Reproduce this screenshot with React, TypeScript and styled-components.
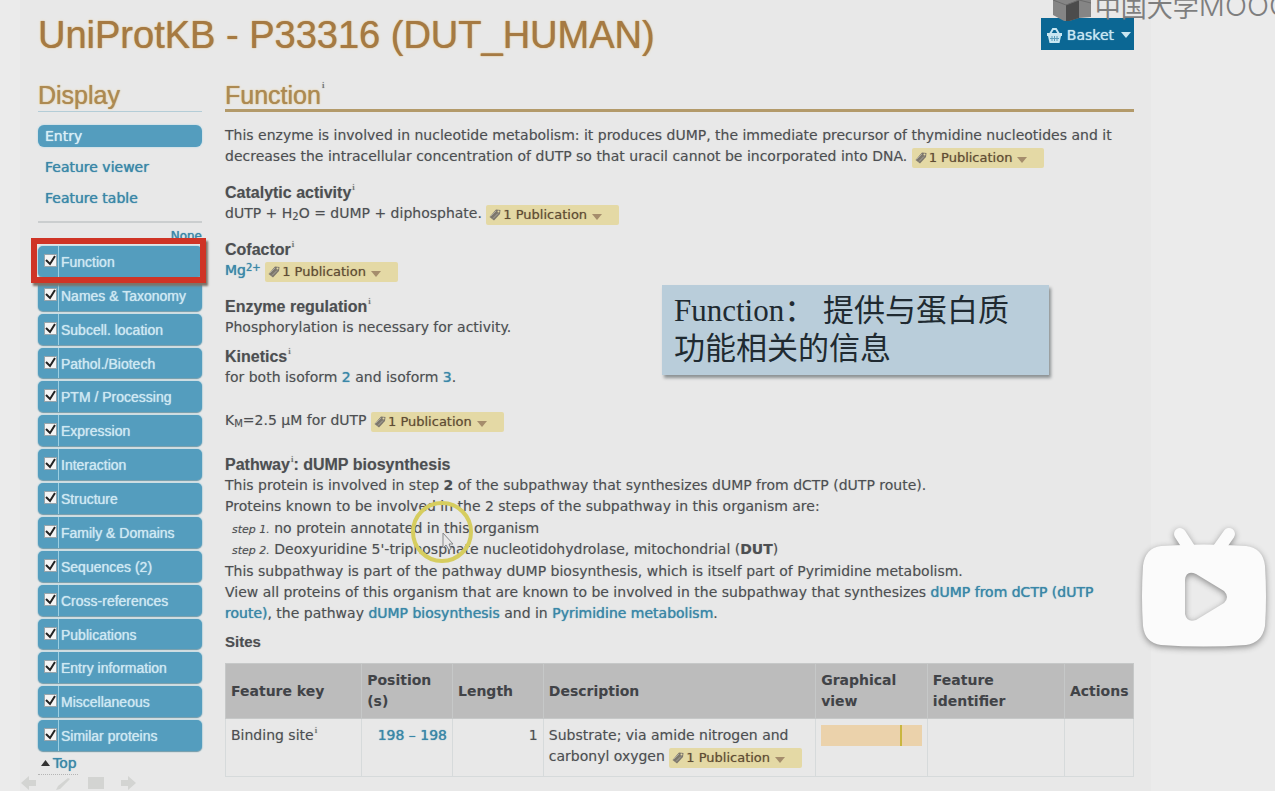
import React from 'react';
import styled, { createGlobalStyle, css } from 'styled-components';

const sans = `"Liberation Sans", Arial, sans-serif`;
const wide = `"DejaVu Sans", Verdana, sans-serif`;
const blue = '#549dbe';
const link = '#3a87a8';
const gold = '#a67a42';
const paleGold = '#ad8a52';

const GlobalStyle = createGlobalStyle`
  *, *::before, *::after { box-sizing: border-box; }
  body { margin: 0; background: #e8e8e8; }
  h1, h2, h3, h4, p, ul, ol { margin: 0; padding: 0; font-weight: normal; }
  ul, ol { list-style: none; }
  a { color: ${link}; text-decoration: none; }
  button, input { font: inherit; }
`;

const Page = styled.div`
  position: relative;
  display: flex;
  flex-direction: column;
  min-height: 100vh;
  overflow: hidden;
  padding: 0 141px 15px 38px;
  background: linear-gradient(to right, #ebebeb 20px, #e8e8e8 20px, #e8e8e8 calc(100% - 124px), #ebebeb calc(100% - 124px));
  color: #4d4f52;
  font: 14px/21px ${wide};
  text-shadow: 0 0 1px #b4b5b6;
`;

const TopBar = styled.header`
  display: flex;
  justify-content: space-between;
  align-items: flex-start;
  padding-top: 12px;
`;

const Title = styled.h1`
  color: ${gold};
  font: 38px/46px ${sans};
  text-shadow: 0 0 1px ${gold}, 0 0 3px #f3dfb8;
`;

const BasketButton = styled.button`
  display: flex;
  align-items: center;
  gap: 5px;
  height: 32px;
  margin-top: 6px;
  padding: 2px 3px 0 6px;
  border: 0;
  background: #0b6794;
  color: #c9e6f1;
  text-shadow: 0 0 1px #c9e6f1;
  white-space: nowrap;
  svg:last-child { margin-left: 2px; }
`;

const Columns = styled.div`
  display: flex;
  align-items: flex-start;
  gap: 23px;
  padding-top: 22px;
`;

const Sidebar = styled.nav`
  flex: 0 0 164px;
`;

const Main = styled.main`
  flex: 1;
  min-width: 0;
`;

const SectionTitle = styled.h2<{ $strong?: boolean }>`
  height: 32px;
  margin-bottom: 13px;
  border-bottom: ${p => (p.$strong ? '3px solid #b39a6a' : '1px solid #b4cdd7')};
  color: ${paleGold};
  font: 25px/30px ${sans};
  text-shadow: 0 0 1px ${paleGold}, 0 0 3px #f3dfb8;
`;

const Info = styled.sup`
  margin-left: 1px;
  font: 9px/10px "Liberation Serif", serif;
  vertical-align: top;
  color: #66686a;
  text-shadow: 0 0 1px #66686a;
`;

const ViewLink = styled.a<{ $active?: boolean }>`
  display: block;
  height: 22px;
  margin-bottom: 9px;
  padding-left: 7px;
  border-radius: 6px;
  line-height: 22px;
  text-shadow: 0 0 1px currentColor;
  ${p => p.$active && css`
    background: ${blue};
    color: #d9eef6;
    box-shadow: 0 0 2px #9fd0e3;
  `}
`;

const NoneRow = styled.div`
  height: 25px;
  margin-top: 12px;
  padding-top: 4px;
  border-top: 2px solid #cbcecf;
  text-align: right;
  font-size: 12px;
  line-height: 18px;
  a { text-shadow: 0 0 1px currentColor; }
`;

const SectionList = styled.ul`
  display: grid;
  grid-auto-rows: 1fr;
  gap: 3px;
  height: 505px;
`;

const SectionItem = styled.li<{ $marked?: boolean }>`
  position: relative;
  display: flex;
  border-radius: 5px;
  background: ${blue};
  box-shadow: 0 0 2px #7fc0da, 0 1px 1px #6d8c99;
  ${p => p.$marked && css`
    z-index: 1;
    &::after {
      content: '';
      position: absolute;
      inset: -8px -4px -6px -7px;
      border: 6px solid #cf3426;
      box-shadow: 2px 3px 2px #7d7369;
      pointer-events: none;
    }
  `}
`;

const SectionLabel = styled.label`
  display: flex;
  align-items: stretch;
  width: 100%;
  color: #cfe8f2;
  font: 14px/28px ${sans};
  text-shadow: 0 0 1px #cfe8f2;
  white-space: nowrap;
`;

const Check = styled.input`
  appearance: none;
  flex: 0 0 13px;
  height: 13px;
  margin: 8px 1px 0 6px;
  border: 1px solid #97a5ac;
  background: #f4f4f4 url("data:image/svg+xml,%3Csvg xmlns='http://www.w3.org/2000/svg' viewBox='0 0 11 11'%3E%3Cpath d='M1 5l4 4 5-8' fill='none' stroke='%23222' stroke-width='2'/%3E%3C/svg%3E") center / contain no-repeat;
`;

const LabelText = styled.span`
  padding: 2px 0 0 2px;
  border-left: 1px solid #9dcfe2;
`;

const TopLink = styled.a`
  display: inline-flex;
  align-items: center;
  gap: 3px;
  height: 22px;
  margin-top: 1px;
  padding: 0 1px 0 3px;
  border-bottom: 1px dotted #b5b5b5;
  text-shadow: 0 0 1px currentColor;
`;

const Block = styled.section<{ $gap?: number }>`
  margin-top: ${p => p.$gap ?? 15}px;
`;

const BlockTitle = styled.h3`
  font: bold 16px/21px ${sans};
`;

const SitesTitle = styled.h3`
  margin: 7px 0 11px;
  font: bold 15px/21px ${sans};
`;

const SpacedText = styled.p`
  margin-top: 22px;
`;

const Small = styled.span<{ $raise?: boolean }>`
  font-size: 10px;
  line-height: 10px;
  vertical-align: ${p => (p.$raise ? '4px' : '-2px')};
`;

const TextLink = styled.a`
  text-shadow: 0 0 1px ${link};
`;

const Steps = styled.ol`
  padding: 1px 0 1px 7px;
  em { font-size: 11px; line-height: 11px; }
`;

const Badge = styled.button`
  display: inline-flex;
  align-items: center;
  height: 20px;
  margin: -4px 0;
  padding: 0 17px 0 3px;
  border: 0;
  border-radius: 2px;
  background: #e4d9a5;
  color: #5e4c35;
  font-size: 13px;
  line-height: 20px;
  vertical-align: -3px;
  white-space: nowrap;
  text-shadow: 0 0 1px #a08b62;
  svg:first-child { margin-right: 2px; }
  svg:last-child { margin: 3px 0 0 5px; }
`;

const DataTable = styled.table`
  width: 100%;
  table-layout: fixed;
  border-collapse: collapse;
  th, td {
    padding: 6px 5px;
    border: 1px solid #d6dadb;
    text-align: left;
    vertical-align: top;
  }
  th {
    background: #bcbcbc;
    border-color: #c6c8c8;
    color: #414347;
    vertical-align: middle;
  }
  td { height: 58px; }
  td.num { text-align: right; }
`;

const Track = styled.div`
  display: flex;
  justify-content: flex-end;
  height: 21px;
  padding-right: 20px;
  background: #ebd2ab;
  &::after { content: ''; width: 2px; background: #c9b63f; }
`;

const Callout = styled.aside`
  position: absolute;
  left: 662px;
  top: 285px;
  width: 387px;
  padding: 7px 12px;
  background: #b9cdda;
  box-shadow: 2px 3px 3px #8d9294;
  color: #202a31;
  font: 31px/38px "Liberation Serif", "Noto Sans CJK SC", serif;
  text-shadow: none;
`;

const Pointer = styled.svg`
  position: absolute;
  left: 409px;
  top: 500px;
`;

const Player = styled.button`
  position: absolute;
  right: 0;
  top: 518px;
  width: 141px;
  height: 141px;
  padding: 0;
  border: 0;
  background: none;
  svg { display: block; filter: drop-shadow(0 2px 3px #8a8a8a); }
`;

const Watermark = styled.div`
  position: absolute;
  top: -9px;
  right: -15px;
  display: flex;
  align-items: center;
  gap: 4px;
  height: 30px;
  color: #7e7e7e;
  font: 26px/30px "Noto Sans CJK SC", sans-serif;
  text-shadow: none;
  white-space: nowrap;
  span { font: 300 29px/30px Inter, sans-serif; }
`;

const WatermarkText = styled.div`
  display: flex;
  align-items: center;
`;

const SlideTools = styled.svg`
  position: absolute;
  left: 20px;
  top: 774px;
`;

const Caret = ({ color = '#a58d6c' }: { color?: string }) => (
  <svg width="10" height="6" viewBox="0 0 10 6"><path d="M0 0h10L5 6z" fill={color} /></svg>
);

const Publication = () => (
  <Badge type="button">
    <svg width="12" height="12" viewBox="0 0 12 12">
      <path d="M7 0.500 11.500 1 11 5 5 11.500 0.500 8z" fill="#7d776c" />
      <path d="M1.500 7.500 7 2M4 9.500l5-5" stroke="#a9a69d" strokeWidth="1" />
      <circle cx="9.500" cy="2.500" r="1" fill="#e4d9a5" />
    </svg>
    1 Publication
    <Caret />
  </Badge>
);

const sections = [
  'Function', 'Names & Taxonomy', 'Subcell. location', 'Pathol./Biotech', 'PTM / Processing',
  'Expression', 'Interaction', 'Structure', 'Family & Domains', 'Sequences (2)',
  'Cross-references', 'Publications', 'Entry information', 'Miscellaneous', 'Similar proteins',
];

const columns: [string, string][] = [
  ['Feature key', '15%'], ['Position (s)', '10%'], ['Length', '10%'], ['Description', '30%'],
  ['Graphical view', '12.3%'], ['Feature identifier', '15.1%'], ['Actions', '7.6%'],
];

export default function App() {
  return (
    <Page>
      <GlobalStyle />
      <TopBar>
        <Title>UniProtKB - P33316 (DUT_HUMAN)</Title>
        <BasketButton type="button">
          <svg width="15" height="15" viewBox="0 0 15 15">
            <path d="M0 5h15v3h-1l-1.500 7h-10L1 8H0z" fill="#c9e6f1" />
            <path d="M3 6 6 1h3l3 5" fill="none" stroke="#c9e6f1" strokeWidth="2" />
            <path d="M5 8v5M7.500 8v5M10 8v5M3 10.500h9" stroke="#5c9dbb" strokeWidth="1" />
          </svg>
          Basket
          <Caret color="#c9e6f1" />
        </BasketButton>
      </TopBar>

      <Columns>
        <Sidebar aria-label="Display">
          <SectionTitle>Display</SectionTitle>
          <ViewLink href="#entry" $active>Entry</ViewLink>
          <ViewLink href="#viewer">Feature viewer</ViewLink>
          <ViewLink href="#table">Feature table</ViewLink>
          <NoneRow><a href="#none">None</a></NoneRow>
          <SectionList>
            {sections.map((name, i) => (
              <SectionItem key={name} $marked={i === 0}>
                <SectionLabel>
                  <Check type="checkbox" defaultChecked />
                  <LabelText>{name}</LabelText>
                </SectionLabel>
              </SectionItem>
            ))}
          </SectionList>
          <TopLink href="#top">
            <svg width="9" height="6" viewBox="0 0 9 6"><path d="M0 6h9L4.500 0z" fill="#333" /></svg>
            Top
          </TopLink>
        </Sidebar>

        <Main>
          <SectionTitle $strong>Function<Info>i</Info></SectionTitle>
          <p>
            This enzyme is involved in nucleotide metabolism: it produces dUMP, the immediate precursor of
            thymidine nucleotides and it decreases the intracellular concentration of dUTP so that uracil
            cannot be incorporated into DNA. <Publication />
          </p>

          <Block>
            <BlockTitle>Catalytic activity<Info>i</Info></BlockTitle>
            <p>dUTP + H<Small>2</Small>O = dUMP + diphosphate. <Publication /></p>
          </Block>

          <Block>
            <BlockTitle>Cofactor<Info>i</Info></BlockTitle>
            <p><TextLink href="#mg">Mg<Small $raise>2+</Small></TextLink> <Publication /></p>
          </Block>

          <Block>
            <BlockTitle>Enzyme regulation<Info>i</Info></BlockTitle>
            <p>Phosphorylation is necessary for activity.</p>
          </Block>

          <Block $gap={8}>
            <BlockTitle>Kinetics<Info>i</Info></BlockTitle>
            <p>for both isoform <TextLink href="#iso2">2</TextLink> and isoform <TextLink href="#iso3">3</TextLink>.</p>
            <SpacedText>K<Small>M</Small>=2.5 µM for dUTP <Publication /></SpacedText>
          </Block>

          <Block $gap={23}>
            <BlockTitle>Pathway<Info>i</Info>: dUMP biosynthesis</BlockTitle>
            <p>This protein is involved in step <b>2</b> of the subpathway that synthesizes dUMP from dCTP (dUTP route).</p>
            <p>Proteins known to be involved in the 2 steps of the subpathway in this organism are:</p>
            <Steps>
              <li><em>step 1.</em> no protein annotated in this organism</li>
              <li><em>step 2.</em> Deoxyuridine 5'-triphosphate nucleotidohydrolase, mitochondrial (<b>DUT</b>)</li>
            </Steps>
            <p>This subpathway is part of the pathway dUMP biosynthesis, which is itself part of Pyrimidine metabolism.</p>
            <p>
              View all proteins of this organism that are known to be involved in the subpathway that synthesizes{' '}
              <TextLink href="#route">dUMP from dCTP (dUTP route)</TextLink>, the pathway{' '}
              <TextLink href="#dump">dUMP biosynthesis</TextLink> and in{' '}
              <TextLink href="#pyrimidine">Pyrimidine metabolism</TextLink>.
            </p>
          </Block>

          <SitesTitle>Sites</SitesTitle>
          <DataTable>
            <colgroup>{columns.map(([name, width]) => <col key={name} width={width} />)}</colgroup>
            <thead>
              <tr>{columns.map(([name]) => <th key={name} scope="col">{name}</th>)}</tr>
            </thead>
            <tbody>
              <tr>
                <td>Binding site<Info>i</Info></td>
                <td className="num"><TextLink href="#198">198 – 198</TextLink></td>
                <td className="num">1</td>
                <td>Substrate; via amide nitrogen and carbonyl oxygen <Publication /></td>
                <td><Track /></td>
                <td />
                <td />
              </tr>
            </tbody>
          </DataTable>
        </Main>
      </Columns>

      <Callout>Function： 提供与蛋白质功能相关的信息</Callout>

      <Pointer width="66" height="66" viewBox="0 0 66 66" aria-hidden="true">
        <circle cx="33" cy="32" r="29" fill="none" stroke="#d6cd5f" strokeWidth="4" />
        <path d="M34 33v15l3-3 3 5 2-1-2-5h4z" fill="#e8e8e8" stroke="#85878a" strokeWidth="1" />
      </Pointer>

      <Player type="button" aria-label="Play">
        <svg width="141" height="141" viewBox="1134 518 141 141">
          <path d="M1180 534l11 17M1229 534l-12 17" stroke="#fbfbfb" strokeWidth="12" strokeLinecap="round" />
          <path
            fillRule="evenodd"
            fill="#fbfbfb"
            d="M1161 546Q1204 543 1246 546Q1263 548 1265 566Q1267 597 1265 626Q1262 643 1246 645Q1204 648 1161 645Q1145 643 1143 626Q1141 597 1143 566Q1145 548 1161 546ZM1185 580V614Q1187 623 1196 620L1224 603Q1230 597 1224 591L1196 574Q1186 570 1185 580Z"
          />
        </svg>
      </Player>

      <Watermark>
        <svg width="38" height="30" viewBox="0 0 38 30">
          <path d="M0 0h38v26l-12 1-13 4-13-7z" fill="#858585" />
          <path d="M13 14l13-5v18l-13 4z" fill="#4c4c4c" />
          <path d="M0 9l13 5 13-5 12 3" fill="none" stroke="#6b6b6b" />
        </svg>
        <WatermarkText>中国大学<span>MOOC</span></WatermarkText>
      </Watermark>

      <SlideTools width="120" height="17" viewBox="0 0 120 17" aria-hidden="true" fill="#d3d4d2">
        <path d="M1 9l8-7v4h7v6H9v4zM48 4l2 1-10 10-4 1 2-4zM68 3h16v12H68zM116 9l-8-7v4h-7v6h7v4z" />
      </SlideTools>
    </Page>
  );
}
